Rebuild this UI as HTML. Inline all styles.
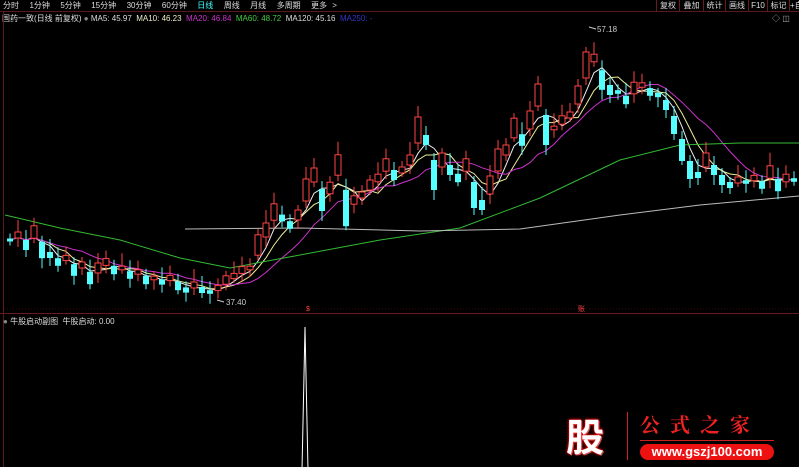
<!DOCTYPE html>
<html><head><meta charset="utf-8"><style>
body{margin:0;background:#000;width:799px;height:467px;overflow:hidden;position:relative;font-family:"Liberation Sans","Noto Sans CJK SC",sans-serif;}
.t{position:absolute;font-size:8px;white-space:nowrap;color:#ddd}
.btn{position:absolute;top:0;height:11px;border-left:1px solid #6a1a1a;font-size:8px;line-height:11px;color:#ddd;padding:0;text-align:center;white-space:nowrap;overflow:hidden;box-sizing:border-box}
</style></head><body>
<div class="t" style="left:3px;top:0px;word-spacing:3px">分时 &nbsp;1分钟 &nbsp;5分钟 &nbsp;15分钟 &nbsp;30分钟 &nbsp;60分钟 &nbsp;<span style="color:#4ff">日线</span> &nbsp;周线 &nbsp;月线 &nbsp;多周期 &nbsp;更多 &gt;</div>
<div style="position:absolute;left:0;top:11px;width:799px;height:1px;background:#5a1a1a"></div>
<div class="btn" style="left:656px;width:23px">复权</div>
<div class="btn" style="left:679px;width:24px">叠加</div>
<div class="btn" style="left:703px;width:22px">统计</div>
<div class="btn" style="left:725px;width:23px">画线</div>
<div class="btn" style="left:748px;width:19px">F10</div>
<div class="btn" style="left:767px;width:22px">标记</div>
<div class="btn" style="left:789px;width:12px">+自</div>
<div class="t" style="left:2px;top:13px">国药一致(日线 前复权) <span style="color:#888">●</span> MA5: 45.97 &nbsp;<span style="color:#eec">MA10: 46.23</span> &nbsp;<span style="color:#c3c">MA20: 46.84</span> &nbsp;<span style="color:#4c4">MA60: 48.72</span> &nbsp;MA120: 45.16 &nbsp;<span style="color:#33c">MA250: -</span></div>
<div class="t" style="left:772px;top:13px;color:#aaa">◇ ◫</div>
<div style="position:absolute;left:3px;top:11px;width:1px;height:456px;background:#5a1a1a"></div>
<div style="position:absolute;left:0;top:313px;width:799px;height:1px;background:#6a1a1a"></div>
<div class="t" style="left:3px;top:316px"><span style="color:#888">●</span> 牛股启动副图 &nbsp;牛股启动: 0.00</div>
<svg id="s" width="799" height="467" style="position:absolute;left:0;top:0">
<line x1="4" y1="309" x2="799" y2="309" stroke="#3a0a0a" stroke-dasharray="1,2"/>
<text x="306" y="311" fill="#f44" font-size="7">$</text>
<text x="578" y="311" fill="#f44" font-size="7">账</text>
<polyline points="0,470 302,470 305,327 308,470 799,470" fill="none" stroke="#fff" stroke-width="1"/>
<text x="597" y="32" fill="#ccc" font-size="8" font-family="Liberation Sans">57.18</text>
<line x1="589" y1="27" x2="596" y2="29" stroke="#ccc"/>
<text x="226" y="305" fill="#ccc" font-size="8" font-family="Liberation Sans">37.40</text>
<line x1="217" y1="300" x2="224" y2="302" stroke="#ccc"/>
<g id="ma"></g><g id="c"></g>
</svg>
<div style="position:absolute;left:555px;top:410px;width:60px;height:50px;font:bold 38px 'Noto Sans CJK SC',sans-serif;color:#fff;text-shadow:0 0 3px #f00,0 0 2px #f00,1px 1px 0 #aaa;text-align:center;line-height:50px">股</div>
<div style="position:absolute;left:627px;top:412px;width:1px;height:48px;background:#c22"></div>
<div style="position:absolute;left:640px;top:409px;font:bold 20px 'Noto Serif CJK SC',serif;color:#e22;letter-spacing:10px">公式之家</div>
<div style="position:absolute;left:640px;top:440px;width:134px;height:1px;background:#c22"></div>
<div style="position:absolute;left:640px;top:444px;width:134px;height:16px;border-radius:8px;background:#e11;color:#fff;font:bold 13px 'Liberation Sans',sans-serif;text-align:center;line-height:16px">www.gszj100.com</div>
<script>
var P=[[10,240],[18,235],[26,245],[34,232],[42,250],[50,255],[58,262],[66,258],[74,270],[82,265],[90,278],[98,268],[106,262],[114,270],[122,268],[130,275],[138,272],[146,280],[154,278],[162,282],[170,278],[178,286],[186,290],[194,285],[202,290],[210,292],[218,288],[226,280],[234,276],[242,270],[250,268],[258,245],[266,230],[274,212],[282,218],[290,225],[298,215],[306,190],[314,175],[322,200],[330,188],[338,165],[346,208],[354,200],[362,195],[370,185],[378,178],[386,165],[394,175],[402,170],[410,160],[418,130],[426,140],[434,175],[442,160],[450,170],[458,178],[466,165],[474,195],[482,205],[490,185],[498,160],[506,150],[514,128],[522,140],[530,120],[538,95],[546,130],[554,128],[562,120],[570,115],[578,95],[586,65],[594,58],[602,80],[610,90],[618,92],[626,100],[634,88],[642,85],[650,92],[658,95],[666,105],[674,125],[682,150],[690,170],[698,175],[706,160],[714,170],[722,180],[730,185],[738,180],[746,182],[754,178],[762,185],[770,172],[778,185],[786,178],[794,180]];
var c=document.getElementById('c'),h='';
P.forEach(function(p,i){var x=p[0],m=p[1],prev=i?P[i-1][1]:m,up=m<prev,b=Math.max(3,Math.abs(m-prev)*0.8+2);var t=m-b/2;
var col=up?'#f44':'#5ff';
h+='<line x1="'+x+'" x2="'+x+'" y1="'+(t-5-(i*7%9))+'" y2="'+(t+b+4+(i*5%7))+'" stroke="'+col+'"/>';
h+='<rect x="'+(x-3)+'" y="'+t+'" width="6" height="'+b+'" '+(up?'fill="#000" stroke="#f44"':'fill="#5ff"')+'/>';});
c.innerHTML=h;
function ma(n,col){var s='';for(var i=0;i<P.length;i++){var a=0,k=0;for(var j=Math.max(0,i-n+1);j<=i;j++){a+=P[j][1];k++}s+=P[i][0]+','+(a/k)+' ';}return '<polyline points="'+s+'" fill="none" stroke="'+col+'" stroke-width="1"/>';}
document.getElementById('ma').innerHTML=ma(3,'#eee')+ma(5,'#ee9')+ma(10,'#c3c')+'<polyline points="5,215 60,228 120,240 180,258 230,268 300,255 380,240 460,228 540,198 620,160 680,145 740,143 799,143" fill="none" stroke="#3b3"/>'+'<polyline points="185,229 300,228 420,231 520,229 620,215 700,205 799,196" fill="none" stroke="#bbb"/>';
</script>
</body></html>
